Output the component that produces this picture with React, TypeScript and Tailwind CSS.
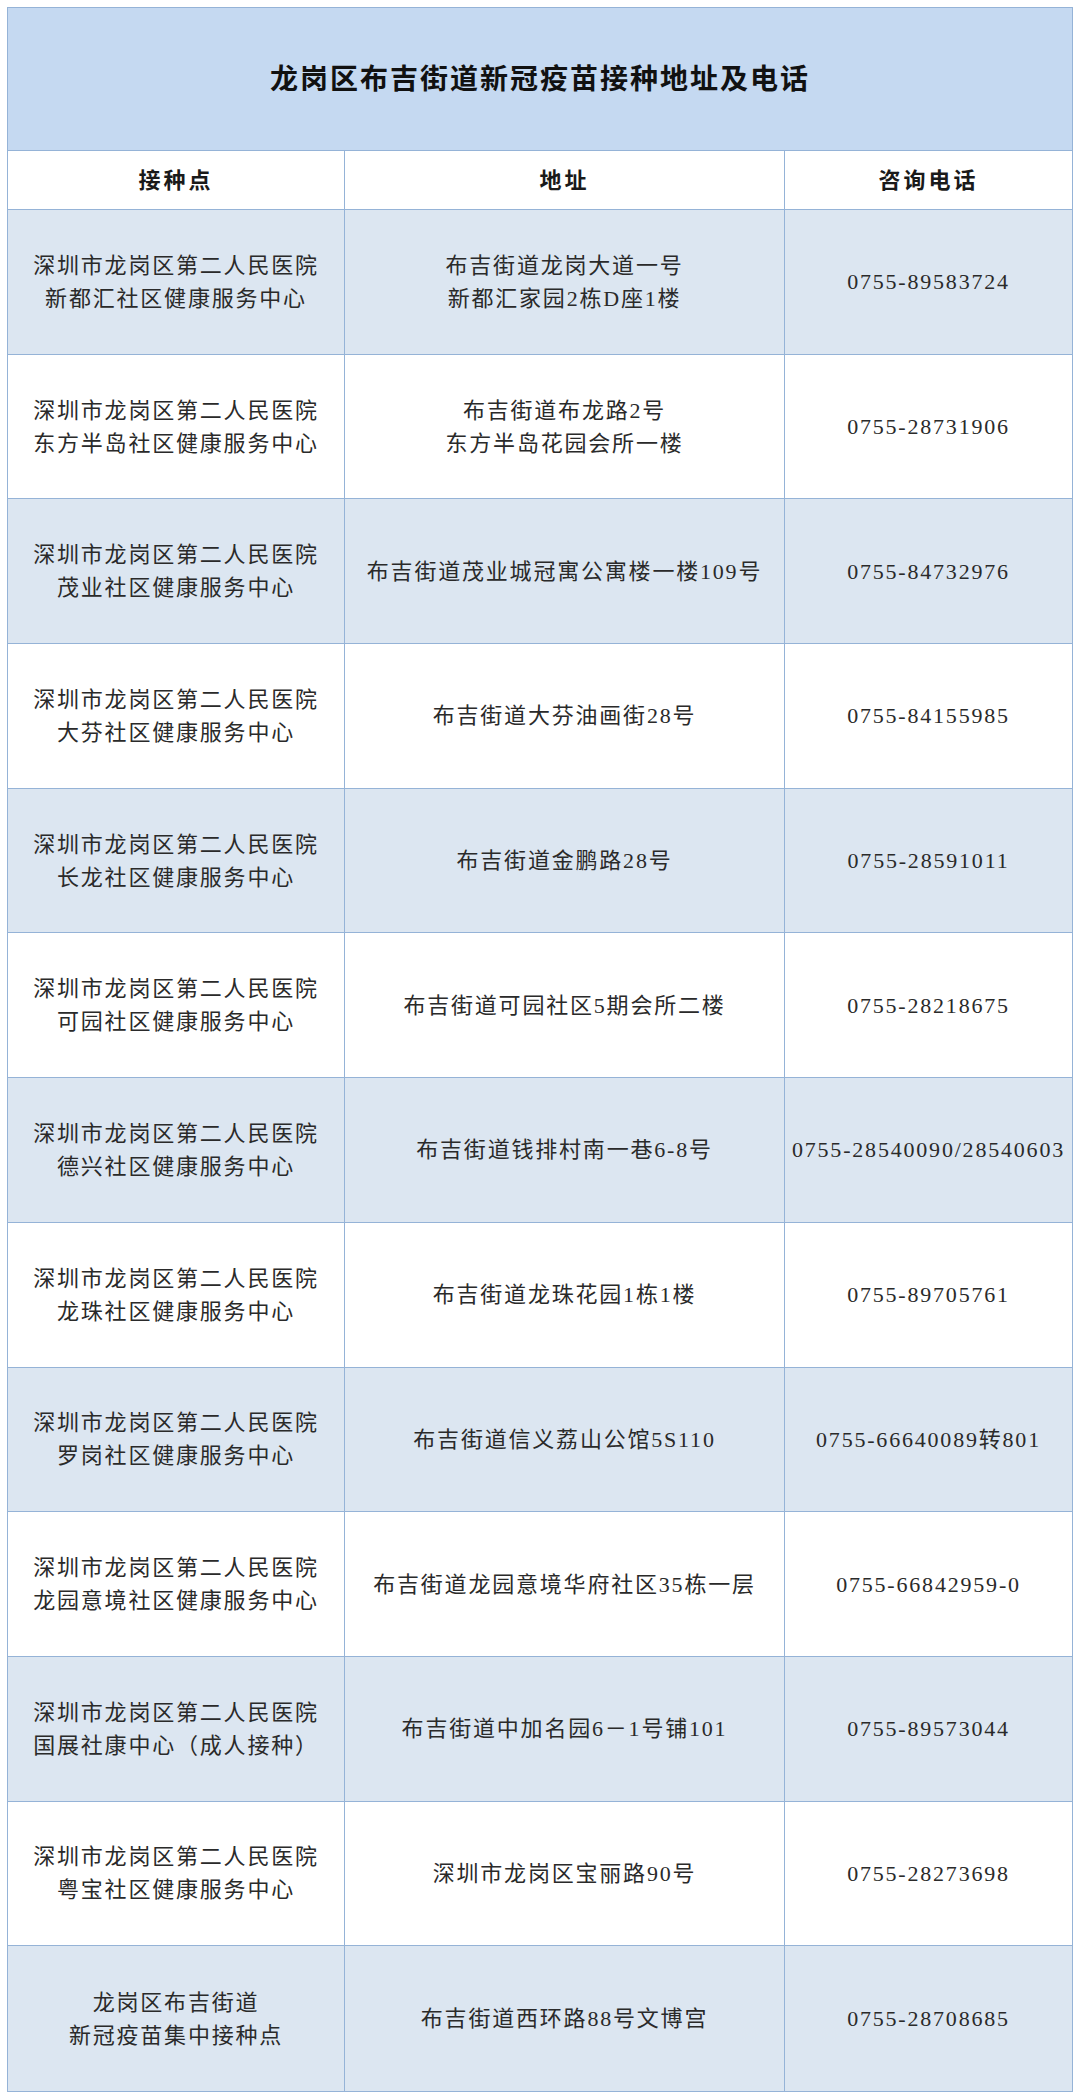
const rows: { site: string[]; address: string[]; phone: string }[] = [
  { site: ['深圳市龙岗区第二人民医院', '新都汇社区健康服务中心'], address: ['布吉街道龙岗大道一号', '新都汇家园2栋D座1楼'], phone: '0755-89583724' },
  { site: ['深圳市龙岗区第二人民医院', '东方半岛社区健康服务中心'], address: ['布吉街道布龙路2号', '东方半岛花园会所一楼'], phone: '0755-28731906' },
  { site: ['深圳市龙岗区第二人民医院', '茂业社区健康服务中心'], address: ['布吉街道茂业城冠寓公寓楼一楼109号'], phone: '0755-84732976' },
  { site: ['深圳市龙岗区第二人民医院', '大芬社区健康服务中心'], address: ['布吉街道大芬油画街28号'], phone: '0755-84155985' },
  { site: ['深圳市龙岗区第二人民医院', '长龙社区健康服务中心'], address: ['布吉街道金鹏路28号'], phone: '0755-28591011' },
  { site: ['深圳市龙岗区第二人民医院', '可园社区健康服务中心'], address: ['布吉街道可园社区5期会所二楼'], phone: '0755-28218675' },
  { site: ['深圳市龙岗区第二人民医院', '德兴社区健康服务中心'], address: ['布吉街道钱排村南一巷6-8号'], phone: '0755-28540090/28540603' },
  { site: ['深圳市龙岗区第二人民医院', '龙珠社区健康服务中心'], address: ['布吉街道龙珠花园1栋1楼'], phone: '0755-89705761' },
  { site: ['深圳市龙岗区第二人民医院', '罗岗社区健康服务中心'], address: ['布吉街道信义荔山公馆5S110'], phone: '0755-66640089转801' },
  { site: ['深圳市龙岗区第二人民医院', '龙园意境社区健康服务中心'], address: ['布吉街道龙园意境华府社区35栋一层'], phone: '0755-66842959-0' },
  { site: ['深圳市龙岗区第二人民医院', '国展社康中心（成人接种）'], address: ['布吉街道中加名园6－1号铺101'], phone: '0755-89573044' },
  { site: ['深圳市龙岗区第二人民医院', '粤宝社区健康服务中心'], address: ['深圳市龙岗区宝丽路90号'], phone: '0755-28273698' },
  { site: ['龙岗区布吉街道', '新冠疫苗集中接种点'], address: ['布吉街道西环路88号文博宫'], phone: '0755-28708685' },
];

const Cell = ({ lines, last = false }: { lines: string[]; last?: boolean }) => (
  <div
    className={`flex flex-col items-center justify-center text-center ${last ? '' : 'border-r border-[#95b3d7]'}`}
  >
    {lines.map((l, i) => (
      <div key={i} className="whitespace-nowrap">
        {l}
      </div>
    ))}
  </div>
);

export default function App() {
  return (
    <div
      className="bg-white w-[1080px] min-h-[2098px] pt-[7px] pl-[7px]"
      style={{ fontFamily: '"Liberation Serif", "Noto Sans CJK SC", serif' }}
    >
      <div className="w-[1066px] border border-[#95b3d7]">
        {/* Title */}
        <div className="h-[143px] bg-[#c5d9f1] flex items-center justify-center border-b border-[#95b3d7]">
          <h1 className="text-[28px] font-bold tracking-[2px] text-[#111] pt-[2px]">
            龙岗区布吉街道新冠疫苗接种地址及电话
          </h1>
        </div>

        {/* Header */}
        <div className="grid grid-cols-[337px_440px_287px] h-[59px] bg-white border-b border-[#95b3d7] text-[22px] font-bold tracking-[3px] text-[#1a1a1a]">
          <Cell lines={['接种点']} />
          <Cell lines={['地址']} />
          <Cell lines={['咨询电话']} last />
        </div>

        {/* Rows */}
        {rows.map((r, i) => (
          <div
            key={i}
            className={`grid grid-cols-[337px_440px_287px] h-[144.7px] text-[22px] leading-[33px] tracking-[1.8px] text-[#2a2a2a] ${
              i === rows.length - 1 ? '' : 'border-b border-[#95b3d7]'
            } ${i % 2 === 0 ? 'bg-[#dce6f1]' : 'bg-white'}`}
          >
            <Cell lines={r.site} />
            <Cell lines={r.address} />
            <Cell lines={[r.phone]} last />
          </div>
        ))}
      </div>
    </div>
  );
}
